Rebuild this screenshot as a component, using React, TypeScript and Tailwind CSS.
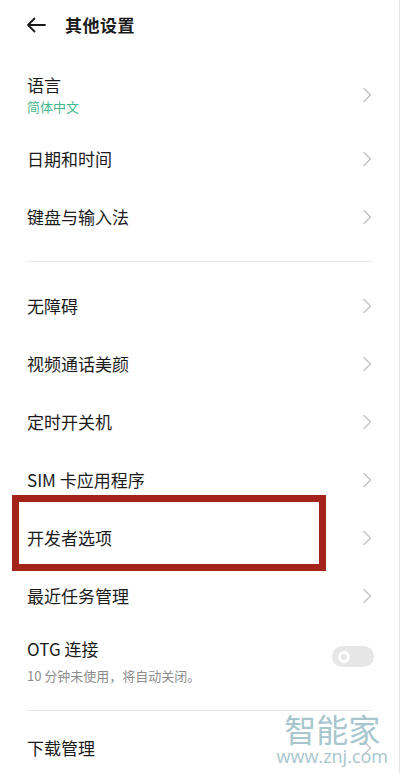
const Chevron = () => (
  <svg width="10" height="16" viewBox="0 0 10 16" fill="none">
    <path d="M2 1.5L8.5 8L2 14.5" stroke="#c2c2c2" strokeWidth="1.4" strokeLinecap="round" strokeLinejoin="round" />
  </svg>
);

const Row = ({ label, h = 58 }: { label: string; h?: number }) => (
  <div className="flex items-center justify-between pl-[27px] pr-[27px]" style={{ height: h }}>
    <span className="text-[17px] text-[#1b1b1b]">{label}</span>
    <Chevron />
  </div>
);

const App = () => {
  return (
    <div
      className="w-[400px] h-[773px] overflow-hidden bg-white relative border-r border-[#e6e6e6]"
      style={{ fontFamily: '"Noto Sans CJK SC", "Noto Sans", sans-serif' }}
    >
      <div className="h-[50px] flex items-center pl-[26px]">
        <svg width="20" height="16" viewBox="0 0 20 16" fill="none">
          <path d="M19 8H2M8.5 1.5L2 8l6.5 6.5" stroke="#1b1b1b" strokeWidth="1.8" strokeLinecap="round" strokeLinejoin="round" />
        </svg>
        <span className="ml-[19px] text-[17px] font-bold tracking-[0.5px] text-[#1b1b1b]">其他设置</span>
      </div>

      <div className="h-[10px]" />

      <div className="h-[70px] flex items-center justify-between px-[27px]">
        <div className="flex flex-col">
          <span className="text-[17px] leading-[24px] text-[#1b1b1b]">语言</span>
          <span className="text-[13px] leading-[20px] text-[#45b88e]">简体中文</span>
        </div>
        <Chevron />
      </div>
      <Row label="日期和时间" />
      <Row label="键盘与输入法" />

      <div className="h-[31px] flex items-center px-[27px]">
        <div className="h-px w-full bg-[#e8e8e8]" />
      </div>

      <Row label="无障碍" />
      <Row label="视频通话美颜" />
      <Row label="定时开关机" />
      <Row label="SIM 卡应用程序" />
      <div className="relative">
        <Row label="开发者选项" />
        <div className="absolute top-[-14px] left-[12px] w-[314px] h-[76px] border-[7px] border-[#a4241c]" />
      </div>
      <Row label="最近任务管理" />

      <div className="h-[76px] flex items-start justify-between pl-[27px] pr-[25px] pt-[12px]">
        <div className="flex flex-col gap-[5px]">
          <span className="text-[17px] leading-[24px] text-[#1b1b1b]">OTG 连接</span>
          <span className="text-[13px] leading-[20px] text-[#8c8c8c]">10 分钟未使用，将自动关闭。</span>
        </div>
        <div className="mt-[9px] w-[42px] h-[21px] rounded-full bg-[#e6e6e6] flex items-center pl-[6px]">
          <div className="w-[12px] h-[12px] rounded-full border-[3px] border-white" />
        </div>
      </div>

      <div className="h-[18px] flex items-center px-[27px]">
        <div className="h-px w-full bg-[#e8e8e8]" />
      </div>

      <div className="h-[58px] flex items-center justify-between px-[27px]">
        <span className="text-[17px] text-[#1b1b1b]">下载管理</span>
        <Chevron />
      </div>

      <div className="absolute right-[11px] bottom-[7px] flex flex-col items-center text-[#a8c6ce]">
        <span className="text-[32px] leading-[36px] font-normal">智能家</span>
        <span className="text-[18px] leading-[20px]" style={{ fontFamily: '"Open Sans", sans-serif' }}>www.znj.com</span>
      </div>
    </div>
  );
};

export default App;
